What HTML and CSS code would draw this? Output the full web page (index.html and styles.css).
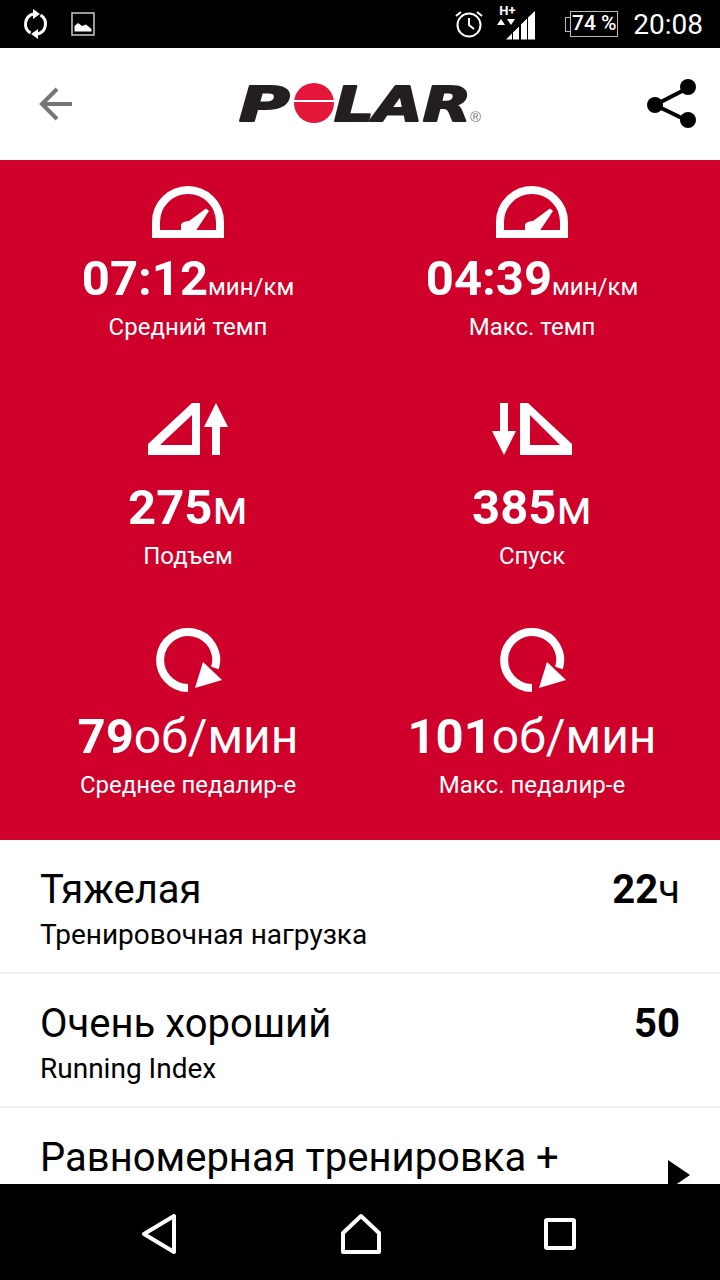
FILE: index.html
```html
<!DOCTYPE html>
<html lang="en">
<head>
    <meta charset="UTF-8">
    <meta name="viewport" content="width=device-width, initial-scale=1.0">
    <title>Polar</title>
    <link rel="stylesheet" href="styles.css">
</head>
<body>
    <svg class="defs" width="0" height="0">
        <symbol id="gauge" viewBox="0 0 80 72">
            <path d="M8 64V52A32 32 0 0 1 72 52V64Z" fill="none" stroke="#fff" stroke-width="8"/>
            <path d="M58 38.500L61 41L47 62H33V54Q36 51 41 51Z" fill="#fff"/>
        </symbol>
        <symbol id="climb" viewBox="0 0 80 72">
            <path fill-rule="evenodd" d="M0 45L44 4H52V56H0ZM12 46H44V16Z" fill="#fff"/>
            <path d="M68 4L80 28H72V56H64V28H56Z" fill="#fff"/>
        </symbol>
        <symbol id="descent" viewBox="0 0 80 72">
            <path d="M8 4H16V32H24L12 56L0 32H8Z" fill="#fff"/>
            <path fill-rule="evenodd" d="M28 4H36L80 45V56H28ZM38 16V46H68Z" fill="#fff"/>
        </symbol>
        <symbol id="cadence" viewBox="0 0 80 72">
            <path d="M40 60A28 28 0 1 1 67 40" fill="none" stroke="#fff" stroke-width="8"/>
            <path d="M47 60L74 52L55 34Z" fill="#fff"/>
        </symbol>
    </svg>

    <div class="phone">
        <div class="status-bar">
            <svg class="sync-icon" width="28" height="32" viewBox="0 0 28 32">
                <path d="M9.500 25A10.500 10.500 0 0 1 12 6M19.500 7A10.500 10.500 0 0 1 17 26" fill="none" stroke="#fff" stroke-width="3"/>
                <path d="M12 1L19 6L12 11ZM17 31L10 26L17 21Z" fill="#fff"/>
            </svg>
            <svg class="image-icon" width="24" height="24" viewBox="0 0 24 24">
                <rect x="1" y="1" width="22" height="22" fill="none" stroke="#ccc" stroke-width="1.5"/>
                <path d="M3.500 19.500V14L7 11L11 14L15 12.500L20.500 17V19.500Z" fill="#fff"/>
            </svg>
            <div class="status-right">
                <svg class="alarm-icon" width="28" height="30" viewBox="0 0 28 30">
                    <circle cx="14" cy="16" r="11.500" fill="none" stroke="#fff" stroke-width="2"/>
                    <path d="M14 9V16L19 20M1 7L6 3M27 7L22 3" fill="none" stroke="#fff" stroke-width="2"/>
                </svg>
                <div class="signal">
                    <span class="network">H+</span>
                    <svg width="40" height="36" viewBox="0 0 40 36">
                        <path d="M1 18L5 12L9 18ZM11 12H19L15 18Z" fill="#fff"/>
                        <path d="M10 32.500L16 26.500V32.500ZM17 32.500V25.500L23 19.500V32.500ZM25 32.500V17.500L31 11.500V32.500ZM32 32.500V10.500L39 4V32.500Z" fill="#fff"/>
                    </svg>
                </div>
                <div class="battery">74 %</div>
                <div class="clock">20:08</div>
            </div>
        </div>

        <header class="top-bar">
            <svg class="back-icon" width="40" height="40" viewBox="0 0 40 40">
                <path d="M36 20H6M21 5L6 20L21 35" fill="none" stroke="#757575" stroke-width="4"/>
            </svg>
            <svg class="logo" width="252" height="64" viewBox="-6 0 252 64">
                <text class="logo-text" transform="translate(-3 49) scale(1.44 1)">P</text>
                <circle cx="72" cy="31" r="20" fill="#e4163a"/>
                <rect x="50" y="28" width="44" height="2" fill="#fff"/>
                <text class="logo-text" transform="translate(92 49) scale(1.31 1)">LAR</text>
                <text class="logo-mark" x="228" y="50">®</text>
            </svg>
            <svg class="share-icon" width="52" height="52" viewBox="0 0 52 52">
                <path d="M41 10L8 27L41 43" fill="none" stroke="#000" stroke-width="4"/>
                <circle cx="41" cy="9" r="8"/>
                <circle cx="8" cy="27" r="8"/>
                <circle cx="41" cy="42" r="8"/>
            </svg>
        </header>

        <main class="content">
            <section class="stats">
                <div class="stat">
                    <svg class="stat-icon"><use href="#gauge"/></svg>
                    <div class="stat-value">07:12<span class="unit-small">мин/км</span></div>
                    <div class="stat-label">Средний темп</div>
                </div>
                <div class="stat">
                    <svg class="stat-icon"><use href="#gauge"/></svg>
                    <div class="stat-value">04:39<span class="unit-small">мин/км</span></div>
                    <div class="stat-label">Макс. темп</div>
                </div>
                <div class="stat">
                    <svg class="stat-icon"><use href="#climb"/></svg>
                    <div class="stat-value">275<span class="unit">м</span></div>
                    <div class="stat-label">Подъем</div>
                </div>
                <div class="stat">
                    <svg class="stat-icon"><use href="#descent"/></svg>
                    <div class="stat-value">385<span class="unit">м</span></div>
                    <div class="stat-label">Спуск</div>
                </div>
                <div class="stat">
                    <svg class="stat-icon"><use href="#cadence"/></svg>
                    <div class="stat-value">79<span class="unit">об/мин</span></div>
                    <div class="stat-label">Среднее педалир-е</div>
                </div>
                <div class="stat">
                    <svg class="stat-icon"><use href="#cadence"/></svg>
                    <div class="stat-value">101<span class="unit">об/мин</span></div>
                    <div class="stat-label">Макс. педалир-е</div>
                </div>
            </section>

            <section class="details">
                <div class="detail-row">
                    <div>
                        <div class="detail-title">Тяжелая</div>
                        <div class="detail-sub">Тренировочная нагрузка</div>
                    </div>
                    <div class="detail-value">22<span class="detail-unit">ч</span></div>
                </div>
                <div class="detail-row">
                    <div>
                        <div class="detail-title">Очень хороший</div>
                        <div class="detail-sub">Running Index</div>
                    </div>
                    <div class="detail-value">50</div>
                </div>
                <div class="detail-row">
                    <div>
                        <div class="detail-title">Равномерная тренировка +</div>
                    </div>
                    <svg class="more-icon" width="22" height="30" viewBox="0 0 22 30">
                        <path d="M0 0L22 15L0 30Z"/>
                    </svg>
                </div>
            </section>
        </main>

        <nav class="nav-bar">
            <svg width="38" height="42" viewBox="0 0 38 42">
                <path d="M33 3V39L3 21Z" fill="none" stroke="#fff" stroke-width="4" stroke-linejoin="round"/>
            </svg>
            <svg width="42" height="42" viewBox="0 0 42 42">
                <path d="M21 3L39 20V39H3V20Z" fill="none" stroke="#fff" stroke-width="4" stroke-linejoin="round"/>
            </svg>
            <svg width="36" height="36" viewBox="0 0 36 36">
                <rect x="4" y="4" width="28" height="28" fill="none" stroke="#fff" stroke-width="4" rx="1"/>
            </svg>
        </nav>
    </div>
</body>
</html>
```

FILE: styles.css
```css
* {
    box-sizing: border-box;
}
body {
    margin: 0;
    font-family: Roboto, "Noto Sans", sans-serif;
    background-color: #fff;
}
.defs {
    position: absolute;
}
.phone {
    width: 720px;
    height: 1280px;
    display: flex;
    flex-direction: column;
    overflow: hidden;
}

/* status bar */
.status-bar {
    height: 48px;
    flex: none;
    display: flex;
    align-items: center;
    background-color: #000;
    color: #fff;
    padding-left: 21px;
}
.image-icon {
    margin-left: 22px;
}
.status-right {
    margin-left: auto;
    display: flex;
    align-items: center;
    padding-right: 17px;
}
.alarm-icon {
    margin-right: 13px;
}
.signal {
    position: relative;
    width: 40px;
    height: 36px;
    margin-top: 2px;
    margin-right: 34px;
}
.network {
    position: absolute;
    left: 3px;
    top: -3px;
    font-size: 13px;
    font-weight: 700;
    line-height: 14px;
}
.battery {
    position: relative;
    width: 48px;
    height: 26px;
    border: 1.5px solid #bbb;
    font-size: 21px;
    font-weight: 500;
    line-height: 23px;
    text-align: center;
    white-space: nowrap;
}
.battery::before {
    content: "";
    position: absolute;
    left: -6px;
    top: 5px;
    width: 5px;
    height: 13px;
    border: 1.5px solid #bbb;
    border-right: none;
}
.clock {
    margin-left: 15px;
    font-size: 28px;
}

/* top bar */
.top-bar {
    height: 112px;
    flex: none;
    display: flex;
    align-items: center;
    justify-content: space-between;
    padding: 0 21px 0 36px;
    background-color: #fff;
}
.logo-text {
    font-family: "DejaVu Sans", sans-serif;
    font-size: 48px;
    font-weight: 700;
    font-style: italic;
    fill: #231f20;
    stroke: #231f20;
    stroke-width: 2px;
    stroke-linejoin: round;
}
.logo-mark {
    font-family: "Liberation Sans", sans-serif;
    font-size: 15px;
    fill: #777;
}

/* main area */
.content {
    flex: 1;
    overflow: hidden;
}
.stats {
    height: 680px;
    padding: 10px 16px 0;
    display: grid;
    grid-template-columns: 1fr 1fr;
    grid-auto-rows: 229px;
    background-color: #cf0029;
    color: #fff;
    text-align: center;
}
.stat {
    display: flex;
    flex-direction: column;
    align-items: center;
}
.stat-icon {
    width: 80px;
    height: 72px;
    flex: none;
}
.stat-value {
    margin-top: 9px;
    font-size: 49px;
    font-weight: 700;
    line-height: 56px;
    white-space: nowrap;
}
.unit {
    font-size: 48px;
    font-weight: 400;
}
.unit-small {
    font-size: 24px;
    font-weight: 400;
    line-height: 0;
}
.stat-label {
    margin-top: 4px;
    font-size: 24px;
    line-height: 32px;
}

/* list below the stats */
.detail-row {
    height: 134px;
    padding: 28px 40px 0;
    display: flex;
    justify-content: space-between;
    border-bottom: 2px solid #eee;
    color: #000;
}
.detail-title {
    font-size: 40px;
    line-height: 44px;
}
.detail-sub {
    margin-top: 7px;
    font-size: 28px;
    line-height: 32px;
}
.detail-value {
    font-size: 40px;
    font-weight: 700;
    line-height: 44px;
}
.detail-unit {
    font-size: 40px;
    font-weight: 400;
}
.more-icon {
    margin-top: 24px;
    margin-right: -10px;
}

/* bottom navigation */
.nav-bar {
    height: 96px;
    flex: none;
    display: flex;
    align-items: center;
    justify-content: space-between;
    padding: 4px 142px 0 141px;
    background-color: #000;
}
```
